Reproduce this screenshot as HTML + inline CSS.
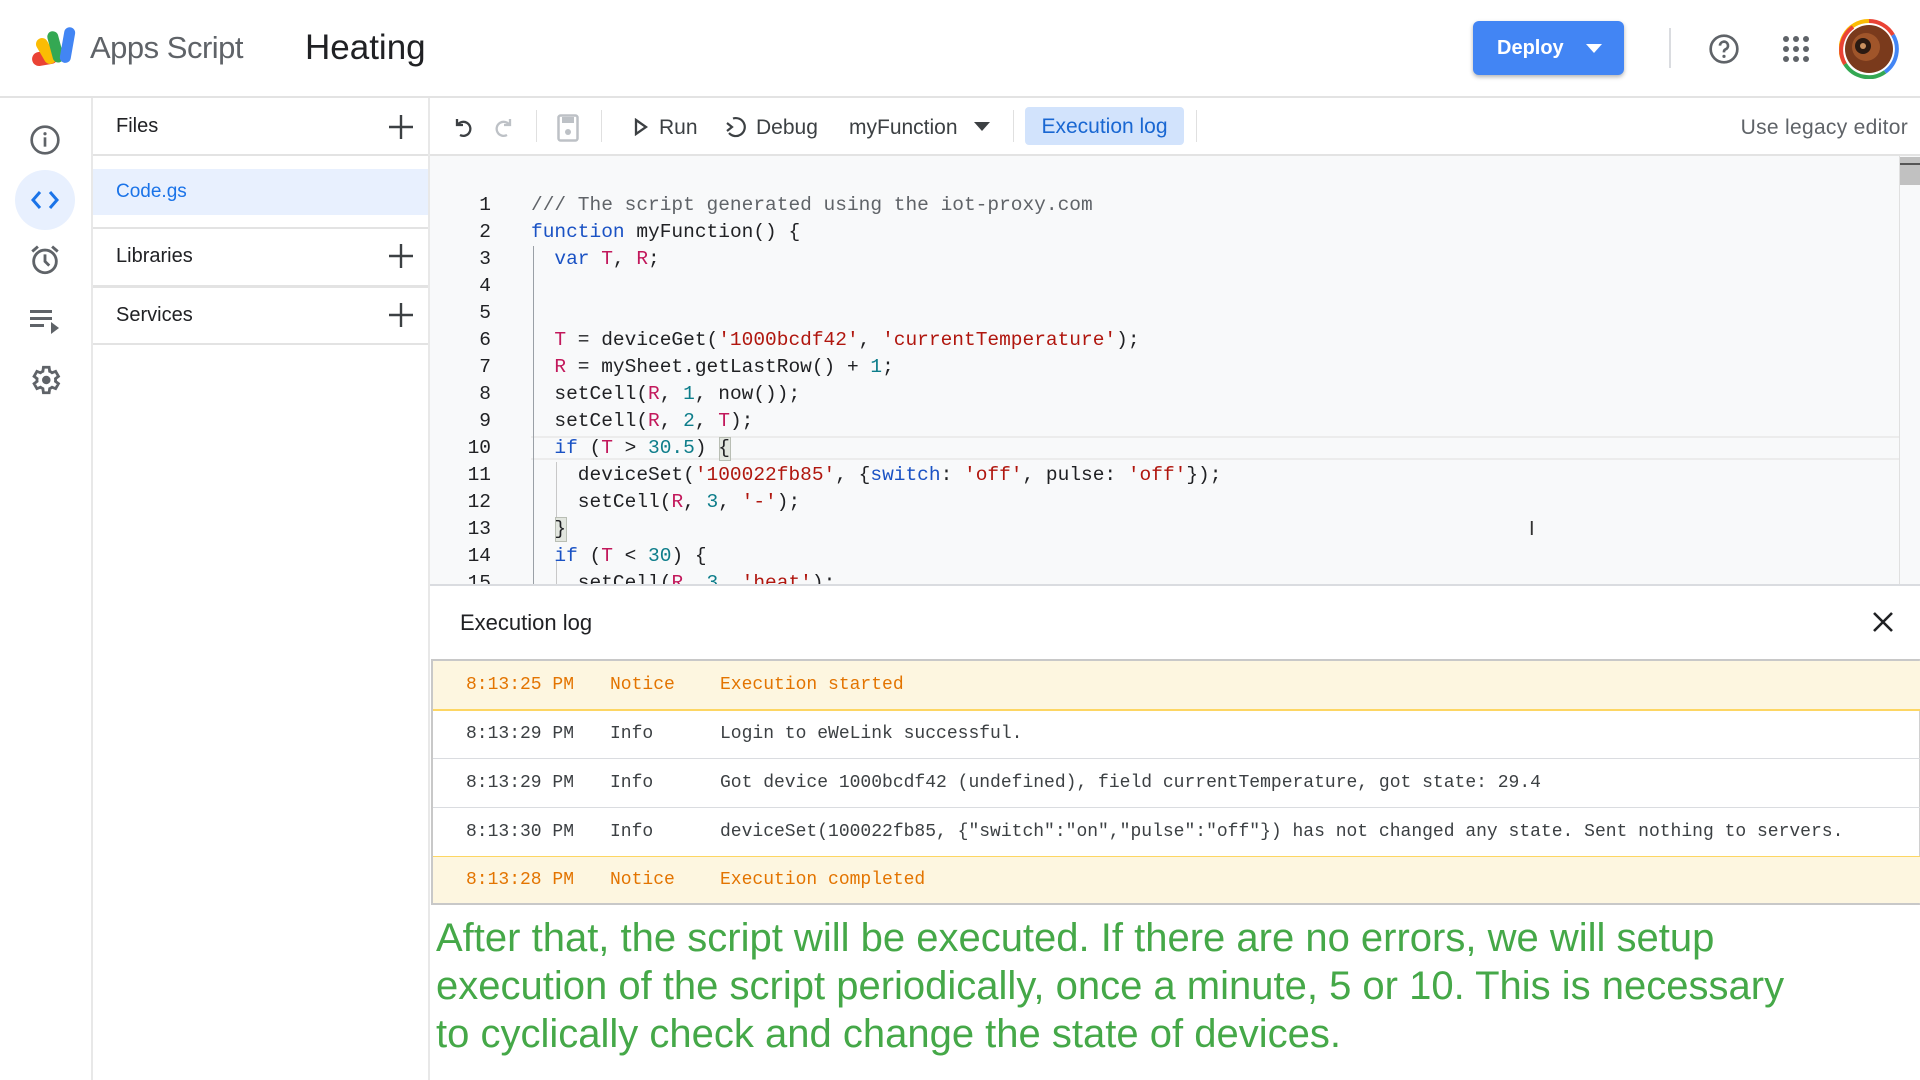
<!DOCTYPE html>
<html><head><meta charset="utf-8">
<style>
*{margin:0;padding:0;box-sizing:border-box}
body{width:1920px;height:1080px;overflow:hidden;background:#fff;font-family:"Liberation Sans",Arial,sans-serif;color:#202124;position:relative}
.a{position:absolute}
.code div{position:absolute;left:0;height:27px;line-height:27px;white-space:pre;font-size:19.5px;font-family:"Liberation Mono",monospace;color:#202124}
.ln{color:#80868b;text-align:right;width:60px;left:431px!important}
.k{color:#1a52c4}.v{color:#c2185b}.s{color:#b0160e}.n{color:#0d7d8a}.c{color:#5f6368!important}
.row{position:absolute;left:433px;right:0;height:49px;line-height:49px;font-size:18px;white-space:pre;font-family:"Liberation Mono",monospace;color:#3c4043}
.row span{position:absolute}
.y{background:#fdf6e0;color:#e37400}
.green{position:absolute;left:436px;color:#45a848;font-size:40px;line-height:48px;white-space:nowrap;font-family:"Liberation Sans",sans-serif}
</style></head><body>

<!-- header -->
<svg class="a" style="left:30px;top:25px" width="52" height="44" viewBox="0 0 52 44">
 <rect x="2" y="26" width="26" height="14" rx="7" fill="#ea4335" transform="rotate(-10 15 33)"/>
 <rect x="10" y="12" width="12" height="28" rx="6" fill="#fbbc04" transform="rotate(-30 16 26)"/>
 <rect x="20" y="6" width="11" height="32" rx="5.5" fill="#34a853" transform="rotate(-15 25 22)"/>
 <rect x="32" y="2" width="11" height="36" rx="5.5" fill="#4285f4" transform="rotate(10 37 20)"/>
</svg>
<div class="a" style="left:90px;top:30px;font-size:31px;color:#5f6368;letter-spacing:-0.5px">Apps Script</div>
<div class="a" style="left:305px;top:28px;font-size:35px;color:#202124">Heating</div>

<div class="a" style="left:1473px;top:21px;width:151px;height:54px;background:#4285f4;border-radius:6px;box-shadow:0 2px 4px rgba(0,0,0,.3);color:#fff;font-weight:bold;font-size:20px;line-height:54px;padding-left:24px">Deploy</div>
<svg class="a" style="left:1586px;top:44px" width="16" height="10"><path d="M0 0h16L8 9z" fill="#fff"/></svg>
<div class="a" style="left:1669px;top:28px;width:2px;height:40px;background:#dadce0"></div>
<svg class="a" style="left:1708px;top:33px" width="32" height="32" viewBox="0 0 24 24"><circle cx="12" cy="12" r="10" fill="none" stroke="#5f6368" stroke-width="2"/><path d="M9 9.5a3 3 0 1 1 4 2.8c-.8.4-1 1-1 1.7v.5" fill="none" stroke="#5f6368" stroke-width="2"/><circle cx="12" cy="17.5" r="1.2" fill="#5f6368"/></svg>
<svg class="a" style="left:1783px;top:36px" width="26" height="26" viewBox="0 0 26 26" fill="#5f6368"><circle cx="3" cy="3" r="3"/><circle cx="13" cy="3" r="3"/><circle cx="23" cy="3" r="3"/><circle cx="3" cy="13" r="3"/><circle cx="13" cy="13" r="3"/><circle cx="23" cy="13" r="3"/><circle cx="3" cy="23" r="3"/><circle cx="13" cy="23" r="3"/><circle cx="23" cy="23" r="3"/></svg>
<svg class="a" style="left:1839px;top:19px" width="60" height="60" viewBox="0 0 60 60">
 <path d="M30 2a28 28 0 0 1 24 14" stroke="#ea4335" stroke-width="4" fill="none"/>
 <path d="M54 16a28 28 0 0 1-8 37" stroke="#4285f4" stroke-width="4" fill="none"/>
 <path d="M46 53a28 28 0 0 1-40-8" stroke="#34a853" stroke-width="4" fill="none"/>
 <path d="M6 45A28 28 0 0 1 30 2" stroke="#fbbc04" stroke-width="4" fill="none"/>
 <path d="M6 45A28 28 0 0 1 14 8" stroke="#ea4335" stroke-width="4" fill="none"/>
 <circle cx="30" cy="30" r="24" fill="#7a3a1c"/><circle cx="27" cy="28" r="14" fill="#a0552a"/><circle cx="24" cy="27" r="8" fill="#2b1a12"/><circle cx="24" cy="27" r="3" fill="#c89060"/>
</svg>
<div class="a" style="left:0;top:96px;width:1920px;height:2px;background:#e3e3e3"></div>

<!-- left rail -->
<div class="a" style="left:91px;top:98px;width:2px;height:982px;background:#e8e8e8"></div>
<svg class="a" style="left:29px;top:124px" width="32" height="32" viewBox="0 0 24 24"><circle cx="12" cy="12" r="10" fill="none" stroke="#5f6368" stroke-width="2"/><rect x="11" y="10" width="2" height="7" fill="#5f6368"/><circle cx="12" cy="7.3" r="1.2" fill="#5f6368"/></svg>
<div class="a" style="left:15px;top:170px;width:60px;height:60px;border-radius:50%;background:#e8f0fe"></div>
<svg class="a" style="left:30px;top:189px" width="30" height="22" viewBox="0 0 30 22"><path d="M10 3L3 11l7 8M20 3l7 8-7 8" fill="none" stroke="#1a73e8" stroke-width="3"/></svg>
<svg class="a" style="left:28px;top:243px" width="34" height="34" viewBox="0 0 24 24"><circle cx="12" cy="13" r="8" fill="none" stroke="#5f6368" stroke-width="2"/><path d="M12 8v5l3 3M3 6l4-3.5M21 6l-4-3.5" fill="none" stroke="#5f6368" stroke-width="2"/></svg>
<svg class="a" style="left:30px;top:308px" width="32" height="26" viewBox="0 0 32 26" fill="#5f6368"><rect x="0" y="2" width="22" height="3"/><rect x="0" y="9" width="22" height="3"/><rect x="0" y="16" width="14" height="3"/><path d="M21 14l8 6-8 6z"/></svg>
<svg class="a" style="left:28px;top:363px" width="34" height="34" viewBox="0 0 24 24"><path d="M19.4 13a7.5 7.5 0 0 0 0-2l2.1-1.6-2-3.5-2.5 1a7 7 0 0 0-1.7-1L14.9 3h-4l-.4 2.9a7 7 0 0 0-1.7 1l-2.5-1-2 3.5L6.4 11a7.5 7.5 0 0 0 0 2l-2.1 1.6 2 3.5 2.5-1a7 7 0 0 0 1.7 1l.4 2.9h4l.4-2.9a7 7 0 0 0 1.7-1l2.5 1 2-3.5z" fill="none" stroke="#5f6368" stroke-width="2"/><circle cx="12.9" cy="12" r="3" fill="#5f6368"/></svg>

<!-- files panel -->
<div class="a" style="left:428px;top:98px;width:2px;height:982px;background:#e8e8e8"></div>
<div class="a" style="left:116px;top:115px;font-size:20px">Files</div>
<div class="a" style="left:93px;top:154px;width:335px;height:2px;background:#e3e3e3"></div>
<div class="a" style="left:93px;top:169px;width:335px;height:46px;background:#e8f0fe"></div>
<div class="a" style="left:116px;top:181px;font-size:19px;color:#1a73e8">Code.gs</div>
<div class="a" style="left:93px;top:227px;width:335px;height:2px;background:#e3e3e3"></div>
<div class="a" style="left:116px;top:245px;font-size:20px">Libraries</div>
<div class="a" style="left:93px;top:285px;width:335px;height:3px;background:#e3e3e3"></div>
<div class="a" style="left:116px;top:304px;font-size:20px">Services</div>
<div class="a" style="left:93px;top:343px;width:335px;height:2px;background:#e3e3e3"></div>
<svg class="a" style="left:388px;top:114px" width="26" height="26"><path d="M13 1v24M1 13h24" stroke="#3c4043" stroke-width="2.4"/></svg>
<svg class="a" style="left:388px;top:243px" width="26" height="26"><path d="M13 1v24M1 13h24" stroke="#3c4043" stroke-width="2.4"/></svg>
<svg class="a" style="left:388px;top:302px" width="26" height="26"><path d="M13 1v24M1 13h24" stroke="#3c4043" stroke-width="2.4"/></svg>

<!-- toolbar -->
<svg class="a" style="left:451px;top:115px" width="24" height="24" viewBox="0 0 24 24"><path d="M6 4v6h6M6.5 10A7 7 0 1 1 9 20" fill="none" stroke="#3c4043" stroke-width="2.3"/></svg>
<svg class="a" style="left:492px;top:115px" width="24" height="24" viewBox="0 0 24 24"><path d="M18 4v6h-6M17.5 10A7 7 0 1 0 15 20" fill="none" stroke="#bdc1c6" stroke-width="2.3"/></svg>
<div class="a" style="left:536px;top:110px;width:1px;height:32px;background:#e0e0e0"></div>
<svg class="a" style="left:557px;top:114px" width="22" height="28" viewBox="0 0 22 28"><rect x="1.5" y="1.5" width="19" height="25" rx="2" fill="none" stroke="#bdc1c6" stroke-width="2.5"/><rect x="5" y="3" width="12" height="6" fill="#bdc1c6"/><circle cx="11" cy="18" r="3" fill="#bdc1c6"/></svg>
<div class="a" style="left:601px;top:110px;width:1px;height:32px;background:#e0e0e0"></div>
<svg class="a" style="left:634px;top:118px" width="14" height="18"><path d="M2 2l10 7-10 7z" fill="none" stroke="#3c4043" stroke-width="2.3"/></svg>
<div class="a" style="left:659px;top:116px;font-size:21px;color:#3c4043">Run</div>
<svg class="a" style="left:724px;top:115px" width="24" height="24" viewBox="0 0 24 24"><path d="M9 3.5A9 9 0 1 1 5 18" fill="none" stroke="#3c4043" stroke-width="2.2"/><path d="M3 8l5 4-5 4" fill="none" stroke="#3c4043" stroke-width="2.2"/></svg>
<div class="a" style="left:756px;top:116px;font-size:21px;color:#3c4043">Debug</div>
<div class="a" style="left:849px;top:116px;font-size:21px;color:#3c4043">myFunction</div>
<svg class="a" style="left:974px;top:122px" width="16" height="10"><path d="M0 0h16L8 9z" fill="#3c4043"/></svg>
<div class="a" style="left:1013px;top:110px;width:1px;height:32px;background:#e0e0e0"></div>
<div class="a" style="left:1025px;top:107px;width:159px;height:38px;background:#d2e3fc;border-radius:4px;color:#1967d2;font-size:21px;line-height:40px;text-align:center">Execution log</div>
<div class="a" style="left:1196px;top:110px;width:1px;height:32px;background:#e0e0e0"></div>
<div class="a" style="right:12px;top:116px;font-size:21px;color:#5f6368;letter-spacing:0.3px">Use legacy editor</div>
<div class="a" style="left:430px;top:154px;width:1490px;height:2px;background:#e3e3e3"></div>

<!-- code area -->
<div class="a" style="left:430px;top:156px;width:1490px;height:429px;background:#f8f9fa"></div>
<div class="a" style="left:1899px;top:156px;width:1px;height:429px;background:#e0e0e0"></div>
<div class="a" style="left:1900px;top:157px;width:20px;height:28px;background:#c1c1c1"></div>
<div class="a" style="left:1900px;top:163px;width:20px;height:2px;background:#555"></div>
<div class="a" style="left:531px;top:436px;width:1368px;height:24px;border-top:2px solid #ececec;border-bottom:2px solid #ececec"></div>
<div class="a" style="left:533px;top:246px;width:1px;height:339px;background:#9aa0a6"></div>
<div class="a" style="left:556px;top:462px;width:1px;height:66px;background:#c8c8c8"></div>
<div class="a" style="left:556px;top:560px;width:1px;height:25px;background:#c8c8c8"></div>
<div class="a" style="left:719px;top:437px;width:12px;height:24px;background:#e2e6df;border:1px solid #b9beb4"></div>
<div class="a" style="left:555px;top:517px;width:12px;height:25px;background:#e2e6df;border:1px solid #b9beb4"></div>
<div class="a" style="left:1529px;top:518px;font-size:20px;color:#333">I</div>

<div class="a code" style="left:0;top:192px;width:1899px;height:393px;overflow:hidden">
<div class="ln" style="top:0">1</div><div style="left:531px;top:0" class="c">/// The script generated using the iot-proxy.com</div>
<div class="ln" style="top:27px">2</div><div style="left:531px;top:27px"><span class="k">function</span> myFunction() {</div>
<div class="ln" style="top:54px">3</div><div style="left:531px;top:54px">  <span class="k">var</span> <span class="v">T</span>, <span class="v">R</span>;</div>
<div class="ln" style="top:81px">4</div>
<div class="ln" style="top:108px">5</div>
<div class="ln" style="top:135px">6</div><div style="left:531px;top:135px">  <span class="v">T</span> = deviceGet(<span class="s">'1000bcdf42'</span>, <span class="s">'currentTemperature'</span>);</div>
<div class="ln" style="top:162px">7</div><div style="left:531px;top:162px">  <span class="v">R</span> = mySheet.getLastRow() + <span class="n">1</span>;</div>
<div class="ln" style="top:189px">8</div><div style="left:531px;top:189px">  setCell(<span class="v">R</span>, <span class="n">1</span>, now());</div>
<div class="ln" style="top:216px">9</div><div style="left:531px;top:216px">  setCell(<span class="v">R</span>, <span class="n">2</span>, <span class="v">T</span>);</div>
<div class="ln" style="top:243px">10</div><div style="left:531px;top:243px">  <span class="k">if</span> (<span class="v">T</span> &gt; <span class="n">30.5</span>) {</div>
<div class="ln" style="top:270px">11</div><div style="left:531px;top:270px">    deviceSet(<span class="s">'100022fb85'</span>, {<span class="k">switch</span>: <span class="s">'off'</span>, pulse: <span class="s">'off'</span>});</div>
<div class="ln" style="top:297px">12</div><div style="left:531px;top:297px">    setCell(<span class="v">R</span>, <span class="n">3</span>, <span class="s">'-'</span>);</div>
<div class="ln" style="top:324px">13</div><div style="left:531px;top:324px">  }</div>
<div class="ln" style="top:351px">14</div><div style="left:531px;top:351px">  <span class="k">if</span> (<span class="v">T</span> &lt; <span class="n">30</span>) {</div>
<div class="ln" style="top:378px">15</div><div style="left:531px;top:378px">    setCell(<span class="v">R</span>, <span class="n">3</span>, <span class="s">'heat'</span>);</div>
</div>

<!-- execution log -->
<div class="a" style="left:430px;top:584px;width:1490px;height:2px;background:#dadce0"></div>
<div class="a" style="left:460px;top:610px;font-size:22px;color:#202124">Execution log</div>
<svg class="a" style="left:1872px;top:611px" width="22" height="22"><path d="M2 2l18 18M20 2L2 20" stroke="#202124" stroke-width="2.6"/></svg>
<div class="a" style="left:431px;top:659px;width:1489px;height:246px;border:2px solid #c8c8c8;border-right:1px solid #d0d0d0"></div>
<div class="row y" style="top:661px"><span style="left:33px">8:13:25 PM</span><span style="left:177px">Notice</span><span style="left:287px">Execution started</span></div>
<div class="a" style="left:433px;top:709px;width:1487px;height:2px;background:#fdd663"></div>
<div class="row" style="top:710px"><span style="left:33px">8:13:29 PM</span><span style="left:177px">Info</span><span style="left:287px">Login to eWeLink successful.</span></div>
<div class="a" style="left:433px;top:758px;width:1487px;height:1px;background:#dadce0"></div>
<div class="row" style="top:759px"><span style="left:33px">8:13:29 PM</span><span style="left:177px">Info</span><span style="left:287px">Got device 1000bcdf42 (undefined), field currentTemperature, got state: 29.4</span></div>
<div class="a" style="left:433px;top:807px;width:1487px;height:1px;background:#dadce0"></div>
<div class="row" style="top:808px"><span style="left:33px">8:13:30 PM</span><span style="left:177px">Info</span><span style="left:287px">deviceSet(100022fb85, {"switch":"on","pulse":"off"}) has not changed any state. Sent nothing to servers.</span></div>
<div class="a" style="left:433px;top:856px;width:1487px;height:1px;background:#fdd663"></div>
<div class="row y" style="top:857px;height:46px;line-height:46px"><span style="left:33px">8:13:28 PM</span><span style="left:177px">Notice</span><span style="left:287px">Execution completed</span></div>

<!-- green caption -->
<div class="green" style="top:914px">After that, the script will be executed. If there are no errors, we will setup</div>
<div class="green" style="top:962px">execution of the script periodically, once a minute, 5 or 10. This is necessary</div>
<div class="green" style="top:1010px">to cyclically check and change the state of devices.</div>
</body></html>
